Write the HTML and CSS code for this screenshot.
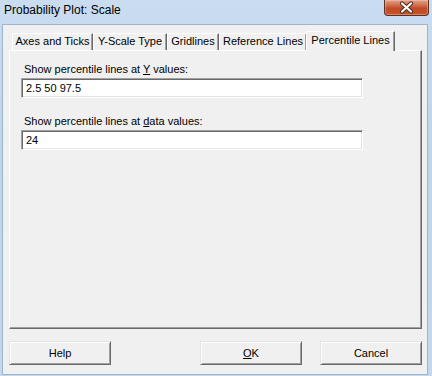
FILE: index.html
```html
<!DOCTYPE html>
<html>
<head>
<meta charset="utf-8">
<link rel="stylesheet" href="styles.css">
</head>
<body>
<div class="window">
  <div class="titlebar">
    <span class="title">Probability Plot: Scale</span>
    <div class="close">
      <svg width="45" height="16" viewBox="0 0 45 16">
        <path d="M18 3.5 L27 11.5 M27 3.5 L18 11.5" stroke="#4a2a22" stroke-width="4.2" stroke-linecap="round" fill="none"/>
        <path d="M18 3.5 L27 11.5 M27 3.5 L18 11.5" stroke="#ffffff" stroke-width="2.2" stroke-linecap="round" fill="none"/>
      </svg>
    </div>
  </div>
  <div class="client">
    <div class="tabs">
      <div class="tab tab-axes">Axes and Ticks</div>
      <div class="tab tab-yscale">Y-Scale Type</div>
      <div class="tab tab-grid">Gridlines</div>
      <div class="tab tab-ref">Reference Lines</div>
      <div class="tab tab-pct active">Percentile Lines</div>
    </div>
    <div class="panel">
      <div class="field-label">Show percentile lines at <u>Y</u> values:</div>
      <div class="input">2.5 50 97.5</div>
      <div class="field-label second">Show percentile lines at <u>d</u>ata values:</div>
      <div class="input">24</div>
    </div>
    <div class="buttons">
      <div class="btn">Help</div>
      <div class="btn ok"><u>O</u>K</div>
      <div class="btn cancel">Cancel</div>
    </div>
  </div>
</div>
</body>
</html>
```
FILE: styles.css
```css
* { box-sizing: border-box; }
html, body { margin: 0; padding: 0; }
body {
  width: 432px;
  height: 376px;
  overflow: hidden;
  font-family: "Liberation Sans", Arial, sans-serif;
  font-size: 11px;
  color: #000;
}
.window {
  width: 432px;
  height: 376px;
  display: flex;
  flex-direction: column;
  background: linear-gradient(180deg, #c9dcf0 0%, #bfd5ec 40%, #c3d8ee 100%);
}
.titlebar {
  height: 24px;
  flex: none;
  display: flex;
  justify-content: space-between;
  align-items: flex-start;
  padding-left: 4px;
  padding-right: 3px;
}
.title {
  font-size: 12px;
  line-height: 15px;
  margin-top: 3px;
  color: #000;
}
.close {
  width: 45px;
  height: 16px;
  border: 1px solid #5a3022;
  border-top: none;
  border-radius: 0 0 4px 4px;
  background: linear-gradient(180deg, #e2a08a 0%, #d0704e 35%, #c04a25 55%, #c6552e 100%);
  box-shadow: inset 0 0 0 1px rgba(255,220,200,0.35);
  position: relative;
}
.close svg { position: absolute; left: -1px; top: 0; }
.client {
  flex: 1;
  margin: 0 4px 1px 2px;
  border: 1px solid #9fb4cc;
  background: #f0f0f0;
  padding: 6px 5px 0 6px;
  display: flex;
  flex-direction: column;
}
.tabs {
  display: flex;
  align-items: flex-end;
  height: 20px;
  padding-left: 3px;
  position: relative;
  z-index: 1;
  margin-bottom: -1px;
}
.tab {
  height: 17px;
  line-height: 15px;
  padding: 0;
  text-align: center;
  border-left: 1px solid #fff;
  border-top: 1px solid #fff;
  border-right: 1px solid #696969;
  box-shadow: inset -1px 0 #a0a0a0;
  background: #f0f0f0;
  white-space: nowrap;
  margin-bottom: 1px;
}
.tab-axes { width: 81px; }
.tab-yscale { width: 74px; }
.tab-grid { width: 52px; }
.tab-ref { width: 88px; }
.tab.active {
  width: 89px;
  height: 20px;
  margin: 0 0 0 -1px;
  padding-top: 1px;
  line-height: 14px;
}
.panel {
  height: 279px;
  border-top: 1px solid #fff;
  border-left: 1px solid #fff;
  border-right: 1px solid #696969;
  border-bottom: 1px solid #696969;
  box-shadow: inset -1px -1px #a0a0a0;
  padding: 11px 0 0 11px;
}
.field-label {
  line-height: 15px;
  padding-left: 3px;
  margin-bottom: 1px;
}
.field-label.second { margin-top: 16px; }
.input {
  width: 342px;
  height: 20px;
  background: #fff;
  border: 1px solid;
  border-color: #a0a0a0 #fff #fff #a0a0a0;
  box-shadow: inset 1px 1px #696969, inset -1px -1px #e3e3e3;
  padding-left: 4px;
  line-height: 18px;
}
.buttons {
  display: flex;
  margin-top: 12px;
}
.btn {
  width: 102px;
  height: 24px;
  line-height: 22px;
  text-align: center;
  border: 1px solid;
  border-color: #e3e3e3 #696969 #696969 #e3e3e3;
  box-shadow: inset 1px 1px #fff, inset -1px -1px #a0a0a0;
  background: #f0f0f0;
}
.btn.ok { margin-left: auto; }
.btn.cancel { margin-left: 18px; }
```
